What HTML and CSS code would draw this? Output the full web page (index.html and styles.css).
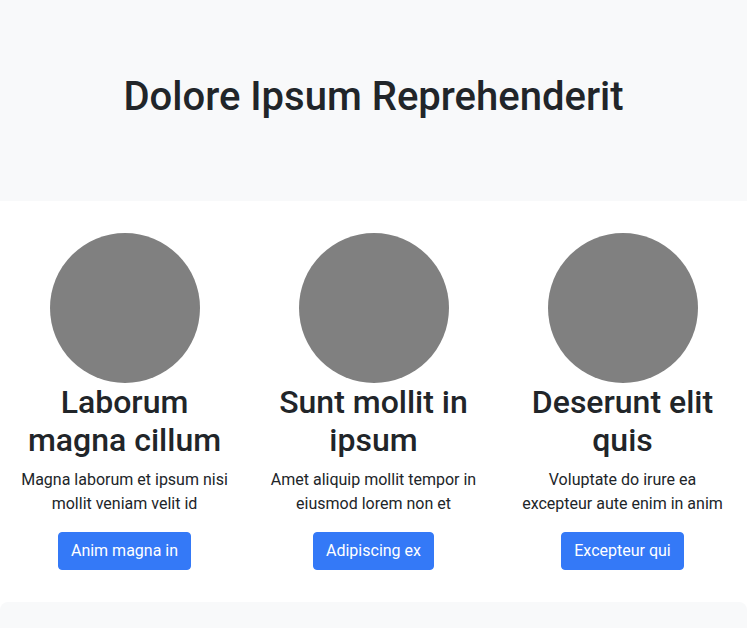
FILE: index.html
```html
<!DOCTYPE html>
<html lang="en">
<head>
<meta charset="utf-8">
<title>Dolore Ipsum Reprehenderit</title>
<link rel="stylesheet" href="styles.css">
</head>
<body>
<header class="hero">
  <h1 class="hero-title">Dolore Ipsum Reprehenderit</h1>
</header>
<section class="features">
  <div class="feature">
    <div class="avatar"></div>
    <h2 class="feature-title">Laborum magna cillum</h2>
    <p class="feature-text">Magna laborum et ipsum nisi mollit veniam velit id</p>
    <a class="btn" href="#">Anim magna in</a>
  </div>
  <div class="feature">
    <div class="avatar"></div>
    <h2 class="feature-title">Sunt mollit in ipsum</h2>
    <p class="feature-text">Amet aliquip mollit tempor in eiusmod lorem non et</p>
    <a class="btn" href="#">Adipiscing ex</a>
  </div>
  <div class="feature">
    <div class="avatar"></div>
    <h2 class="feature-title">Deserunt elit quis</h2>
    <p class="feature-text">Voluptate do irure ea excepteur aute enim in anim</p>
    <a class="btn" href="#">Excepteur qui</a>
  </div>
</section>
<footer class="bottom-card"></footer>
</body>
</html>
```

FILE: styles.css
```css
* { box-sizing: border-box; }
html, body { margin: 0; padding: 0; }
body {
  font-family: Roboto, "Noto Sans", "Liberation Sans", sans-serif;
  color: #212529;
  background: #fff;
  font-size: 16px;
  line-height: 1.5;
}
.hero {
  background: #f8f9fa;
  height: 201px;
  padding-top: 73px;
  text-align: center;
}
.hero-title {
  margin: 0;
  font-size: 40px;
  font-weight: 500;
  line-height: 1.2;
}
.features {
  display: grid;
  grid-template-columns: repeat(3, 1fr);
  padding: 32px 0;
}
.feature {
  padding: 0 12px;
  display: flex;
  flex-direction: column;
  align-items: center;
  text-align: center;
}
.avatar {
  width: 150px;
  height: 150px;
  border-radius: 50%;
  background: #808080;
}
.feature-title {
  margin: 0 0 8px;
  font-size: 32px;
  font-weight: 500;
  line-height: 1.2;
}
.feature-text {
  margin: 0 0 16px;
  max-width: 212px;
  font-size: 16px;
  line-height: 24px;
}
.btn {
  display: inline-block;
  padding: 6px 12px;
  border: 1px solid #3479f7;
  border-radius: 4px;
  background: #3479f7;
  color: #fff;
  text-decoration: none;
  font-size: 16px;
  line-height: 24px;
}
.bottom-card {
  background: #f8f9fa;
  border-radius: 8px 8px 0 0;
  height: 60px;
}
```
